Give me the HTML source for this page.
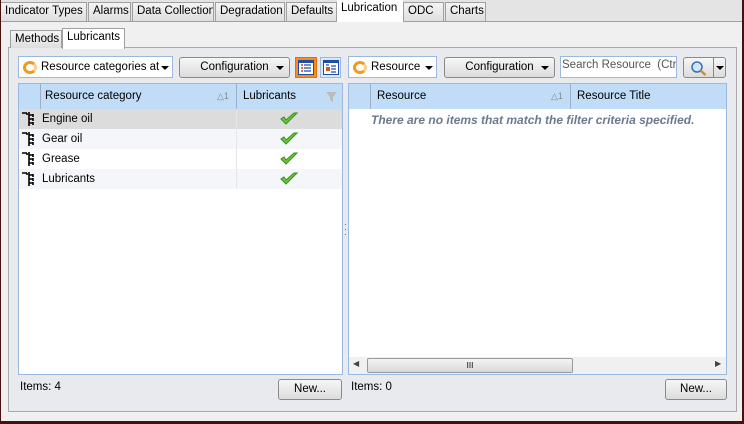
<!DOCTYPE html>
<html><head><style>
*{box-sizing:border-box;margin:0;padding:0}
body{width:744px;height:424px;overflow:hidden;background:#f0f0f0;font-family:"Liberation Sans",sans-serif;font-size:11.5px;color:#000;position:relative}
.a{position:absolute}
.tab{position:absolute;top:2px;height:19px;background:linear-gradient(#f4f4f4,#dedede);border:1px solid #a0a0a0;border-bottom:none;padding:2px 4px;white-space:nowrap;overflow:hidden}
.btn{position:absolute;border:1px solid #8a8a8a;border-radius:3px;background:linear-gradient(#f6f6f6,#dcdcdc);text-align:center;line-height:19px}
.dd{position:absolute;background:#fff;border:1px solid #9bb8de;line-height:20px;padding-left:22px;white-space:nowrap}
.tri{position:absolute;width:0;height:0;border-left:4px solid transparent;border-right:4px solid transparent;border-top:4px solid #000}
.grid{position:absolute;background:#fff;border:1px solid #9bb8de}
.hdr{position:absolute;top:0;height:25px;background:#c0dcf7;border-right:1px solid #9bb0c8;line-height:25px;padding-left:6px}
.row{position:absolute;left:0;width:323px;height:20px;line-height:20px}
.chk{position:absolute;left:261px;top:3px}
.ic{position:absolute;left:2px;top:2px}
.spin{position:absolute;left:4px;top:4px;width:14px;height:13px;border:3px solid #f39a1e;border-radius:50%;border-right-color:#fbd08a}
</style></head><body>
<svg width="0" height="0" style="position:absolute"><defs>
<symbol id="ck" viewBox="0 0 18 14"><path d="M1 7 L6 12 L17 1 L14 1 L6 8 L4 5 Z" fill="#6cc63a" stroke="#3d8f1f" stroke-width="1"/></symbol>
<symbol id="tr" viewBox="0 0 18 16"><path d="M1 2h5M6 2v2M8 1v14M8 4h4M8 8h4M8 12h4M12 3v3M12 7v3M12 11v3" stroke="#000" stroke-width="1.6" fill="none"/></symbol>
</defs></svg>
<div class="a" style="left:0;top:0;width:744px;height:21px;background:#e4e4e4"></div>
<div class="a" style="left:0;top:21px;width:744px;height:1px;background:#a0a0a0"></div>
<div class="tab" style="left:0;width:87px">Indicator Types</div>
<div class="tab" style="left:88px;width:43px">Alarms</div>
<div class="tab" style="left:132px;width:82px">Data Collection</div>
<div class="tab" style="left:215px;width:70px">Degradation</div>
<div class="tab" style="left:286px;width:51px">Defaults</div>
<div class="tab" style="left:337px;top:0;height:22px;width:66px;background:#fff;border:none">Lubrication</div>
<div class="tab" style="left:403px;width:41px">ODC</div>
<div class="tab" style="left:445px;width:41px">Charts</div>
<div class="a" style="left:742px;top:0;width:2px;height:424px;background:#4a1010"></div>
<div class="a" style="left:0;top:421px;width:744px;height:3px;background:#4a1010"></div>
<div class="a" style="left:0;top:0;width:1px;height:424px;background:#4a1010"></div>

<div class="a" style="left:8px;top:47px;width:729px;height:365px;background:#e8eaee;border:1px solid #a8a8a8"></div>
<div class="tab" style="left:10px;top:30px;height:18px;width:52px">Methods</div>
<div class="tab" style="left:62px;top:28px;height:21px;width:63px;background:#fff;border-color:#a0a0a0">Lubricants</div>

<div class="dd" style="left:18px;top:56px;width:155px;height:22px"><div class="spin"></div>Resource categories at<div class="tri" style="left:142px;top:9px"></div></div>
<div class="btn" style="left:179px;top:57px;width:111px;height:21px">Configuration<div class="tri" style="left:96px;top:8px"></div></div>
<div class="a" style="left:295px;top:57px;width:22px;height:21px;background:#f78b1e;border:1px solid #e07010"><svg class="a" style="left:2px;top:2px" width="16" height="15"><rect x="0.5" y="0.5" width="15" height="14" fill="#fff" stroke="#1a4ea8"/><rect x="0.5" y="0.5" width="15" height="2.5" fill="#1a4ea8"/><path d="M3 5h2M3 8h2M3 11h2" stroke="#d33" stroke-width="1.5"/><path d="M6 5h7M6 8h7M6 11h7" stroke="#1a4ea8" stroke-width="1.2"/></svg></div>
<div class="a" style="left:320px;top:57px;width:21px;height:21px;background:#dde8f5;border:1px solid #9bb8de"><svg class="a" style="left:2px;top:2px" width="16" height="15"><rect x="0.5" y="0.5" width="15" height="14" fill="#fff" stroke="#1a4ea8"/><rect x="0.5" y="0.5" width="15" height="2.5" fill="#1a4ea8"/><rect x="3" y="7" width="4" height="4" fill="#c85a1a"/><path d="M8 6h5M8 9h5M8 12h5M3 5h3" stroke="#1a4ea8" stroke-width="1.2"/></svg></div>

<div class="grid" style="left:18px;top:83px;width:325px;height:292px">
<div class="hdr" style="left:0;width:22px"></div>
<div class="hdr" style="left:22px;width:196px;padding-left:4px">Resource category<span class="a" style="left:176px;color:#888;font-size:9px">△1</span></div>
<div class="hdr" style="left:218px;width:105px;border-right:none">Lubricants<svg class="a" style="left:89px;top:8px" width="11" height="10"><path d="M0 0h11L7 5v5L4 8V5Z" fill="#bbb"/></svg></div>
<div class="row" style="top:25px;background:#dcdcdc"><svg class="ic" width="18" height="16"><use href="#tr"/></svg><span class="a" style="left:23px">Engine oil</span><svg class="chk" width="18" height="14"><use href="#ck"/></svg></div>
<div class="row" style="top:45px;background:#f4f6f9"><svg class="ic" width="18" height="16"><use href="#tr"/></svg><span class="a" style="left:23px">Gear oil</span><svg class="chk" width="18" height="14"><use href="#ck"/></svg></div>
<div class="row" style="top:65px"><svg class="ic" width="18" height="16"><use href="#tr"/></svg><span class="a" style="left:23px">Grease</span><svg class="chk" width="18" height="14"><use href="#ck"/></svg></div>
<div class="row" style="top:85px;background:#f4f6f9"><svg class="ic" width="18" height="16"><use href="#tr"/></svg><span class="a" style="left:23px">Lubricants</span><svg class="chk" width="18" height="14"><use href="#ck"/></svg></div>
<div class="a" style="left:217px;top:25px;width:1px;height:80px;background:#e4e6ea"></div>
</div>
<div class="a" style="left:344px;top:222px;color:#333;font-size:8px;line-height:5px">·<br>·<br>·</div>

<div class="dd" style="left:348px;top:56px;width:89px;height:22px"><div class="spin"></div>Resource<div class="tri" style="left:76px;top:9px"></div></div>
<div class="btn" style="left:444px;top:57px;width:111px;height:21px">Configuration<div class="tri" style="left:96px;top:8px"></div></div>
<div class="a" style="left:560px;top:56px;width:117px;height:22px;background:#fff;border:1px solid #9bb8de;color:#555;padding:2px 1px;white-space:nowrap;overflow:hidden">Search Resource&nbsp; (Ctrl+</div>
<div class="btn" style="left:683px;top:57px;width:43px;height:21px"><svg class="a" style="left:6px;top:2px" width="18" height="16"><circle cx="7" cy="7" r="5" fill="#cfe6fb" stroke="#3a70b8" stroke-width="1.5"/><path d="M10.5 10.5l5 4.5" stroke="#c8902a" stroke-width="2.5"/></svg><div class="a" style="left:29px;top:0;width:1px;height:19px;background:#888"></div><div class="tri" style="left:32px;top:8px"></div></div>

<div class="grid" style="left:348px;top:83px;width:379px;height:292px">
<div class="hdr" style="left:0;width:22px"></div>
<div class="hdr" style="left:22px;width:200px">Resource<span class="a" style="left:180px;color:#888;font-size:9px">△1</span></div>
<div class="hdr" style="left:222px;width:155px;border-right:none">Resource Title</div>
<div class="a" style="left:22px;top:29px;color:#6a7a90;font-style:italic;font-weight:bold;white-space:nowrap;font-size:12px">There are no items that match the filter criteria specified.</div>
<div class="a" style="left:0;top:273px;width:377px;height:17px;background:#f0f0f0"><div class="a" style="left:18px;top:1px;width:206px;height:15px;border:1px solid #999;border-radius:2px;background:linear-gradient(#f4f4f4,#d8d8d8);text-align:center;font-size:8px;line-height:13px">III</div><span class="a" style="left:4px;top:2px;font-size:8px;color:#444">◀</span><span class="a" style="left:366px;top:2px;font-size:8px;color:#444">▶</span></div>
</div>

<div class="a" style="left:20px;top:381px">Items: 4</div>
<div class="btn" style="left:278px;top:379px;width:64px;height:21px">New...</div>
<div class="a" style="left:351px;top:381px">Items: 0</div>
<div class="btn" style="left:665px;top:379px;width:62px;height:21px">New...</div>
</body></html>
